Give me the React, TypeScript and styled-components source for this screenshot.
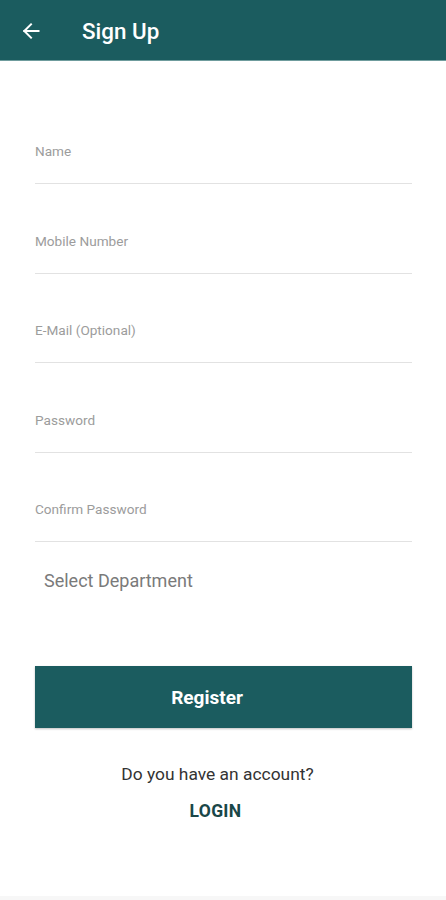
import React from 'react';
import styled, { createGlobalStyle } from 'styled-components';

const GlobalStyle = createGlobalStyle`
  html, body {
    margin: 0;
    padding: 0;
    background: #ffffff;
    font-family: Roboto, "Liberation Sans", Arial, sans-serif;
  }
`;

const TEAL = '#1b5c5f';

const Screen = styled.div`
  width: 446px;
  height: 900px;
  background: #fff;
  display: flex;
  flex-direction: column;
  overflow: hidden;
  border-bottom: 4px solid #f7f7f7;
  box-sizing: border-box;
`;

const Header = styled.header`
  height: 61px;
  background: ${TEAL};
  display: flex;
  align-items: center;
  padding-left: 20px;
  box-sizing: border-box;
  border-bottom: 1px solid #6f9c9d;
`;

const BackButton = styled.div`
  width: 22px;
  height: 22px;
  display: flex;
  align-items: center;
  justify-content: center;
  margin-top: 1px;
`;

const Title = styled.h1`
  margin: 2px 0 0 40px;
  font-size: 22.4px;
  font-weight: 500;
  color: #ffffff;
`;

const Form = styled.div`
  padding: 34px 34px 0 35px;
  display: flex;
  flex-direction: column;
`;

const Field = styled.div<{ first?: boolean }>`
  padding-top: ${(p) => (p.first ? '48px' : '48.5px')};
  display: flex;
  flex-direction: column;
  border-bottom: 1px solid #e2e2e2;
`;

const Label = styled.label`
  font-size: 13.6px;
  line-height: 16px;
  color: #9c9c9c;
  height: 16px;
`;

const InputSpace = styled.div`
  height: 24px;
`;

const Select = styled.div`
  margin-top: 29px;
  padding-left: 9px;
  font-size: 18px;
  color: #7a7a7a;
  line-height: 20px;
`;

const RegisterButton = styled.button`
  margin-top: 75px;
  height: 62px;
  width: 100%;
  padding: 0 33px 0 0;
  background: ${TEAL};
  border: none;
  color: #fff;
  font-family: inherit;
  font-size: 19px;
  font-weight: 700;
  box-shadow: 0 1px 2px rgba(0, 0, 0, 0.25);
`;

const Footer = styled.div`
  display: flex;
  flex-direction: column;
  align-items: center;
  margin-top: 36px;
  padding-right: 16px;
`;

const Question = styled.div`
  font-size: 17.4px;
  color: #333;
  line-height: 20px;
  padding-left: 4px;
`;

const LoginLink = styled.div`
  margin-top: 17px;
  font-size: 17.5px;
  font-weight: 700;
  color: #1a4748;
  line-height: 20px;
  letter-spacing: 0.3px;
`;

const fields = ['Name', 'Mobile Number', 'E-Mail (Optional)', 'Password', 'Confirm Password'];

export default function App() {
  return (
    <>
      <GlobalStyle />
      <Screen>
        <Header>
          <BackButton>
            <svg width="20" height="20" viewBox="0 0 24 24" fill="none" stroke="#fff" strokeWidth="2.4" strokeLinecap="square">
              <path d="M21 12H4" />
              <path d="M12 4l-8 8 8 8" />
            </svg>
          </BackButton>
          <Title>Sign Up</Title>
        </Header>
        <Form>
          {fields.map((f, i) => (
            <Field key={f} first={i === 0}>
              <Label>{f}</Label>
              <InputSpace />
            </Field>
          ))}
          <Select>Select Department</Select>
          <RegisterButton>Register</RegisterButton>
          <Footer>
            <Question>Do you have an account?</Question>
            <LoginLink>LOGIN</LoginLink>
          </Footer>
        </Form>
      </Screen>
    </>
  );
}
